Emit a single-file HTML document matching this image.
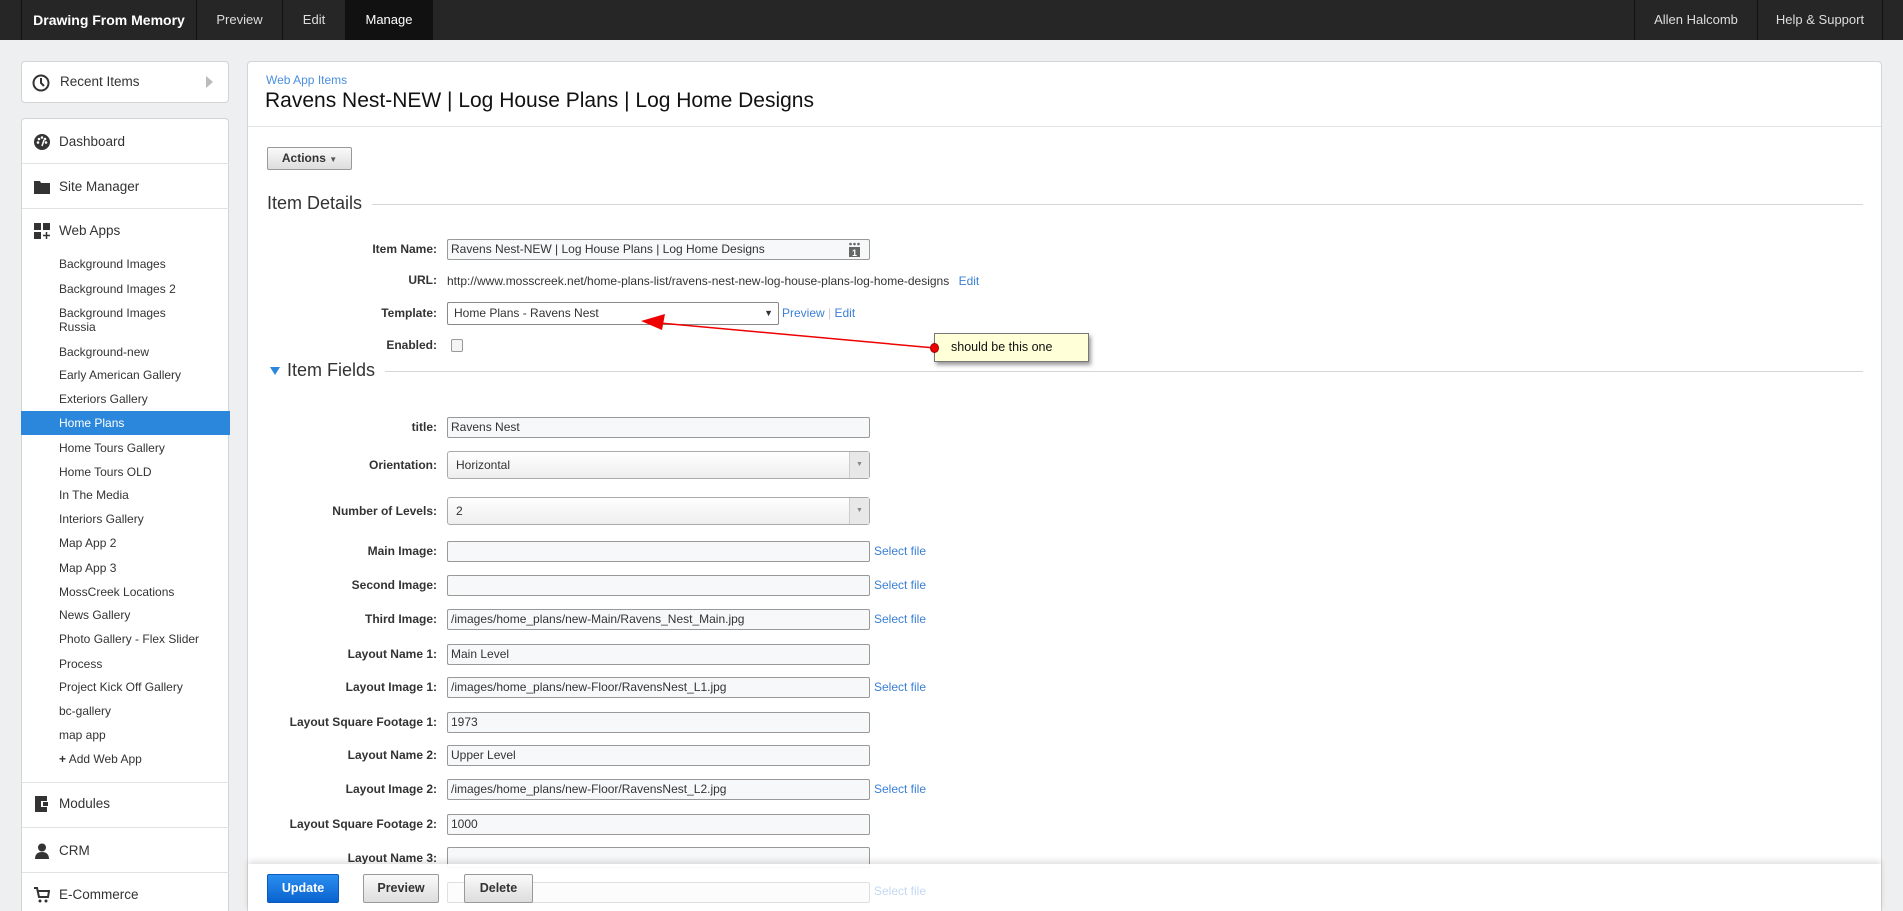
<!DOCTYPE html>
<html style="overflow:hidden;height:911px;width:1903px"><head><meta charset="utf-8"><style>
*{box-sizing:border-box;margin:0;padding:0}
html{overflow:hidden}
body{width:1903px;height:911px;overflow:hidden;background:#eeeff0;font-family:"Liberation Sans",Arial,sans-serif;color:#333;position:relative}
.top{position:absolute;left:0;top:0;width:1903px;height:40px;background:#262626}
.top div{position:absolute;top:0;height:40px;line-height:40px;color:#ddd;font-size:13px;text-align:center;border-left:1px solid #111}
.panel{position:absolute;background:#fff;border:1px solid #d4d4d4;border-radius:4px}
.nv{position:absolute;left:0;width:208px;font-size:13.5px;color:#333}
.nv .ic{position:absolute;left:12px;width:16px;height:16px}
.sep{position:absolute;left:0;width:207px;height:1px;background:#e2e2e2}
.sub{position:absolute;left:37px;font-size:12px;color:#333;line-height:14px}
.lab{position:absolute;right:1466px;font-size:12px;font-weight:bold;color:#333;text-align:right;white-space:nowrap}
.inp{position:absolute;left:447px;width:423px;height:21px;border:1px solid #999;border-radius:2px;background:#f7f8f9;font-size:12px;line-height:19px;padding-left:3px;color:#333}
.sel{position:absolute;left:447px;width:423px;height:28px;border:1px solid #aaa;border-radius:3px;background:linear-gradient(#fff,#eee);font-size:12px;line-height:26px;padding-left:8px}
.sel:after{content:"▼";position:absolute;right:0;top:0;width:19px;height:26px;border-left:1px solid #ccc;font-size:7px;color:#888;text-align:center;background:#e8e8e8}
.lk{position:absolute;left:874px;font-size:12px;color:#3a7fd5}
.btn{position:absolute;top:874px;height:29px;border:1px solid #999;border-radius:2px;background:linear-gradient(#fafafa,#ddd);font-size:12.5px;font-weight:bold;text-align:center;line-height:27px}
</style></head><body>
<div class="top">
<div style="left:21px;width:175px;color:#fff;font-weight:bold;font-size:14px;border-left:1px solid #111">Drawing From Memory</div>
<div style="left:196px;width:86px">Preview</div>
<div style="left:282px;width:63px">Edit</div>
<div style="left:345px;width:87px;background:#111;color:#fff">Manage</div>
<div style="left:432px;width:1px;border-left:1px solid #111"></div>
<div style="left:1634px;width:123px">Allen Halcomb</div>
<div style="left:1757px;width:125px">Help &amp; Support</div>
<div style="left:1882px;width:21px"></div>
</div>

<div class="panel" style="left:21px;top:61px;width:208px;height:42px">
<svg style="position:absolute;left:10px;top:12px" width="18" height="18" viewBox="0 0 18 18"><circle cx="9" cy="9" r="7.5" fill="none" stroke="#333" stroke-width="2"/><path d="M9 4v5l3 3" stroke="#333" stroke-width="2" fill="none"/></svg>
<div style="position:absolute;left:38px;top:12px;font-size:13.5px">Recent Items</div>
<div style="position:absolute;left:184px;top:14px;width:0;height:0;border-left:7px solid #bbb;border-top:6px solid transparent;border-bottom:6px solid transparent"></div>
</div>

<div class="panel" style="left:21px;top:118px;width:208px;height:793px;border-bottom:none;border-radius:4px 4px 0 0">
<div class="nv" style="top:15px"><svg class="ic" viewBox="0 0 16 16"><circle cx="8" cy="8" r="8" fill="#333"/><circle cx="5" cy="5" r="1.3" fill="#fff"/><circle cx="8" cy="3.5" r="1.3" fill="#fff"/><circle cx="11" cy="5" r="1.3" fill="#fff"/><circle cx="4" cy="8.5" r="1.3" fill="#fff"/><circle cx="12" cy="8.5" r="1.3" fill="#fff"/><path d="M8 12l2-6" stroke="#fff" stroke-width="1.5"/></svg><span style="position:absolute;left:37px">Dashboard</span></div>
<div class="sep" style="top:44px"></div>
<div class="nv" style="top:60px"><svg class="ic" viewBox="0 0 16 16"><path d="M0 2h6l1 2h9v11H0z" fill="#333"/></svg><span style="position:absolute;left:37px">Site Manager</span></div>
<div class="sep" style="top:89px"></div>
<div class="nv" style="top:104px"><svg class="ic" viewBox="0 0 16 16"><rect x="0" y="0" width="7" height="7" fill="#333"/><rect x="9" y="0" width="7" height="7" fill="#333"/><rect x="0" y="9" width="7" height="7" fill="#333"/><path d="M12.5 9v7M9 12.5h7" stroke="#333" stroke-width="1.5"/></svg><span style="position:absolute;left:37px">Web Apps</span></div>
<div class="sub" style="top:138px">Background Images</div>
<div class="sub" style="top:163px">Background Images 2</div>
<div class="sub" style="top:187px">Background Images<br>Russia</div>
<div class="sub" style="top:226px">Background-new</div>
<div class="sub" style="top:249px">Early American Gallery</div>
<div class="sub" style="top:273px">Exteriors Gallery</div>
<div style="position:absolute;left:-1px;top:292px;width:209px;height:24px;background:#2a87dc"></div>
<div class="sub" style="top:297px;color:#fff">Home Plans</div>
<div class="sub" style="top:322px">Home Tours Gallery</div>
<div class="sub" style="top:346px">Home Tours OLD</div>
<div class="sub" style="top:369px">In The Media</div>
<div class="sub" style="top:393px">Interiors Gallery</div>
<div class="sub" style="top:417px">Map App 2</div>
<div class="sub" style="top:442px">Map App 3</div>
<div class="sub" style="top:466px">MossCreek Locations</div>
<div class="sub" style="top:489px">News Gallery</div>
<div class="sub" style="top:513px">Photo Gallery - Flex Slider</div>
<div class="sub" style="top:538px">Process</div>
<div class="sub" style="top:561px">Project Kick Off Gallery</div>
<div class="sub" style="top:585px">bc-gallery</div>
<div class="sub" style="top:609px">map app</div>
<div class="sub" style="top:633px"><b>+</b> Add Web App</div>
<div class="sep" style="top:663px"></div>
<div class="nv" style="top:677px"><svg class="ic" viewBox="0 0 16 16"><path d="M1 0h12v5h-6v6h6v5H1z" fill="#333"/><rect x="9" y="6" width="5" height="4" fill="#333"/></svg><span style="position:absolute;left:37px">Modules</span></div>
<div class="sep" style="top:708px"></div>
<div class="nv" style="top:724px"><svg class="ic" viewBox="0 0 16 16"><circle cx="8" cy="4.5" r="4" fill="#333"/><path d="M1 16c0-5 3-7 7-7s7 2 7 7z" fill="#333"/></svg><span style="position:absolute;left:37px">CRM</span></div>
<div class="sep" style="top:753px"></div>
<div class="nv" style="top:768px"><svg class="ic" viewBox="0 0 16 16"><path d="M0 1h3l2 9h9l1-6H4" fill="none" stroke="#333" stroke-width="2"/><circle cx="6" cy="14" r="1.5" fill="#333"/><circle cx="12" cy="14" r="1.5" fill="#333"/></svg><span style="position:absolute;left:37px">E-Commerce</span></div>
</div>

<div class="panel" style="left:247px;top:61px;width:1635px;height:850px;border-bottom:none;border-radius:4px 4px 0 0"></div>
<div style="position:absolute;left:248px;top:126px;width:1633px;height:1px;background:#e2e2e2"></div>
<div style="position:absolute;left:266px;top:73px;font-size:12px;color:#4a8fe0">Web App Items</div>
<div style="position:absolute;left:265px;top:89px;font-size:21px;color:#111">Ravens Nest-NEW | Log House Plans | Log Home Designs</div>
<div class="btn" style="left:267px;top:147px;width:85px;height:23px;line-height:21px;font-size:12px">Actions <span style="font-size:8px;color:#555">▼</span></div>

<div style="position:absolute;left:267px;top:193px;font-size:18px;color:#333">Item Details</div>
<div style="position:absolute;left:372px;top:204px;width:1491px;height:1px;background:#d6d6d6"></div>

<div class="lab" style="top:242px">Item Name:</div>
<div class="inp" style="top:239px;width:423px">Ravens Nest-NEW | Log House Plans | Log Home Designs
<svg style="position:absolute;right:8px;top:2px" width="13" height="16" viewBox="0 0 13 16"><circle cx="2.5" cy="2" r="1.3" fill="#666"/><circle cx="6.5" cy="2" r="1.3" fill="#666"/><circle cx="10.5" cy="2" r="1.3" fill="#666"/><rect x="1" y="5" width="11" height="10" fill="#666"/><text x="6.5" y="14" font-size="9" fill="#fff" text-anchor="middle" font-family="Liberation Sans" font-weight="bold">1</text></svg></div>
<div class="lab" style="top:273px">URL:</div>
<div style="position:absolute;left:447px;top:274px;font-size:12px;color:#333">http://www.mosscreek.net/home-plans-list/ravens-nest-new-log-house-plans-log-home-designs <span style="color:#3a7fd5;margin-left:6px">Edit</span></div>
<div class="lab" style="top:306px">Template:</div>
<div style="position:absolute;left:447px;top:302px;width:332px;height:23px;border:1px solid #888;border-radius:2px;font-size:12px;line-height:21px;padding-left:6px;background:#fff">Home Plans - Ravens Nest<span style="position:absolute;right:5px;font-size:9px">▼</span></div>
<div style="position:absolute;left:782px;top:306px;font-size:12px;color:#3a7fd5">Preview <span style="color:#ccc">|</span> Edit</div>
<div class="lab" style="top:338px">Enabled:</div>
<div style="position:absolute;left:451px;top:339px;width:12px;height:13px;border:1px solid #999;border-radius:2px;background:#f4f4f4"></div>

<div style="position:absolute;left:270px;top:367px;width:0;height:0;border-top:8px solid #2a87dc;border-left:5px solid transparent;border-right:5px solid transparent"></div>
<div style="position:absolute;left:287px;top:360px;font-size:18px;color:#333">Item Fields</div>
<div style="position:absolute;left:385px;top:371px;width:1478px;height:1px;background:#d6d6d6"></div>

<div class="lab" style="top:420px">title:</div><div class="inp" style="top:417px">Ravens Nest</div>
<div class="lab" style="top:458px">Orientation:</div><div class="sel" style="top:451px">Horizontal</div>
<div class="lab" style="top:504px">Number of Levels:</div><div class="sel" style="top:497px">2</div>
<div class="lab" style="top:544px">Main Image:</div><div class="inp" style="top:541px"></div><div class="lk" style="top:544px">Select file</div>
<div class="lab" style="top:578px">Second Image:</div><div class="inp" style="top:575px"></div><div class="lk" style="top:578px">Select file</div>
<div class="lab" style="top:612px">Third Image:</div><div class="inp" style="top:609px">/images/home_plans/new-Main/Ravens_Nest_Main.jpg</div><div class="lk" style="top:612px">Select file</div>
<div class="lab" style="top:647px">Layout Name 1:</div><div class="inp" style="top:644px">Main Level</div>
<div class="lab" style="top:680px">Layout Image 1:</div><div class="inp" style="top:677px">/images/home_plans/new-Floor/RavensNest_L1.jpg</div><div class="lk" style="top:680px">Select file</div>
<div class="lab" style="top:715px">Layout Square Footage 1:</div><div class="inp" style="top:712px">1973</div>
<div class="lab" style="top:748px">Layout Name 2:</div><div class="inp" style="top:745px">Upper Level</div>
<div class="lab" style="top:782px">Layout Image 2:</div><div class="inp" style="top:779px">/images/home_plans/new-Floor/RavensNest_L2.jpg</div><div class="lk" style="top:782px">Select file</div>
<div class="lab" style="top:817px">Layout Square Footage 2:</div><div class="inp" style="top:814px">1000</div>
<div class="lab" style="top:851px">Layout Name 3:</div><div class="inp" style="top:847px"></div>

<div style="position:absolute;left:248px;top:864px;width:1633px;height:47px;background:rgba(255,255,255,0.93);box-shadow:0 -3px 6px rgba(0,0,0,0.12)"></div>
<div class="inp" style="top:882px;opacity:.3"></div><div class="lk" style="top:884px;opacity:.3">Select file</div>
<div class="lab" style="top:885px;opacity:.3;right:1566px">Lay</div>
<div class="btn" style="left:267px;width:72px;background:linear-gradient(#2b8ef0,#0a63cf);border-color:#0a5bbf;color:#fff">Update</div>
<div class="btn" style="left:363px;width:76px">Preview</div>
<div class="btn" style="left:464px;width:69px">Delete</div>

<svg style="position:absolute;left:0;top:0" width="1903" height="911">
<line x1="935" y1="348" x2="660" y2="323" stroke="#e00" stroke-width="1.5"/>
<polygon points="641,321 665,314 662,330" fill="#e00"/>
</svg>
<div style="position:absolute;left:934px;top:333px;width:155px;height:29px;background:#ffffd8;border:1px solid #777;box-shadow:2px 3px 4px rgba(0,0,0,.4);font-size:12.5px;line-height:27px;padding-left:16px;color:#111">should be this one</div>
<div style="position:absolute;left:930px;top:343px;width:9px;height:10px;border-radius:50%;background:#e00;border:1px solid #900"></div>
</body></html>
